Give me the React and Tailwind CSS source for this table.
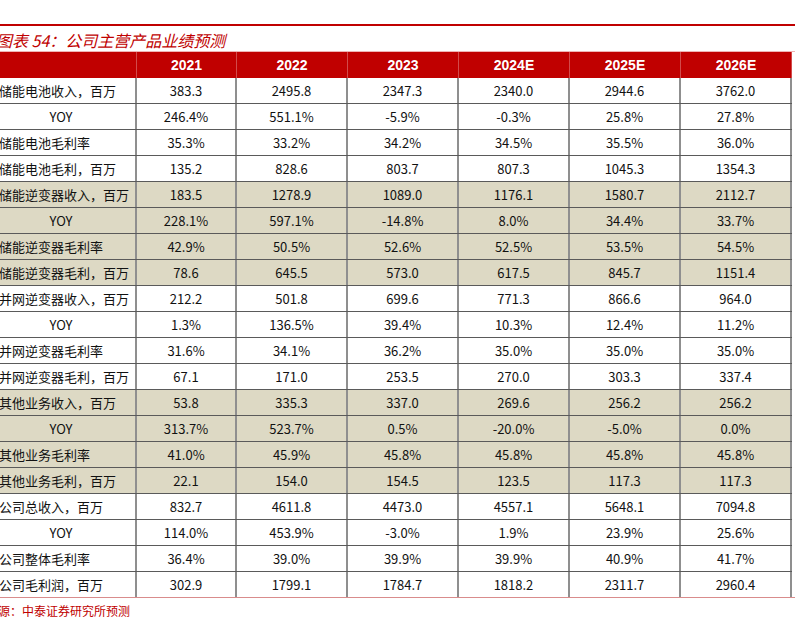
import React from 'react';

const years = ['2021', '2022', '2023', '2024E', '2025E', '2026E'];

// label, values, shaded
const rows = [
  ['储能电池收入，百万', ['383.3', '2495.8', '2347.3', '2340.0', '2944.6', '3762.0'], false],
  ['YOY', ['246.4%', '551.1%', '-5.9%', '-0.3%', '25.8%', '27.8%'], false],
  ['储能电池毛利率', ['35.3%', '33.2%', '34.2%', '34.5%', '35.5%', '36.0%'], false],
  ['储能电池毛利，百万', ['135.2', '828.6', '803.7', '807.3', '1045.3', '1354.3'], false],
  ['储能逆变器收入，百万', ['183.5', '1278.9', '1089.0', '1176.1', '1580.7', '2112.7'], true],
  ['YOY', ['228.1%', '597.1%', '-14.8%', '8.0%', '34.4%', '33.7%'], true],
  ['储能逆变器毛利率', ['42.9%', '50.5%', '52.6%', '52.5%', '53.5%', '54.5%'], true],
  ['储能逆变器毛利，百万', ['78.6', '645.5', '573.0', '617.5', '845.7', '1151.4'], true],
  ['并网逆变器收入，百万', ['212.2', '501.8', '699.6', '771.3', '866.6', '964.0'], false],
  ['YOY', ['1.3%', '136.5%', '39.4%', '10.3%', '12.4%', '11.2%'], false],
  ['并网逆变器毛利率', ['31.6%', '34.1%', '36.2%', '35.0%', '35.0%', '35.0%'], false],
  ['并网逆变器毛利，百万', ['67.1', '171.0', '253.5', '270.0', '303.3', '337.4'], false],
  ['其他业务收入，百万', ['53.8', '335.3', '337.0', '269.6', '256.2', '256.2'], true],
  ['YOY', ['313.7%', '523.7%', '0.5%', '-20.0%', '-5.0%', '0.0%'], true],
  ['其他业务毛利率', ['41.0%', '45.9%', '45.8%', '45.8%', '45.8%', '45.8%'], true],
  ['其他业务毛利，百万', ['22.1', '154.0', '154.5', '123.5', '117.3', '117.3'], true],
  ['公司总收入，百万', ['832.7', '4611.8', '4473.0', '4557.1', '5648.1', '7094.8'], false],
  ['YOY', ['114.0%', '453.9%', '-3.0%', '1.9%', '23.9%', '25.6%'], false],
  ['公司整体毛利率', ['36.4%', '39.0%', '39.9%', '39.9%', '40.9%', '41.7%'], false],
  ['公司毛利润，百万', ['302.9', '1799.1', '1784.7', '1818.2', '2311.7', '2960.4'], false],
];

const cjk = { fontFamily: '"Noto Sans CJK SC", "Liberation Sans", sans-serif' };

const App = () => {
  return (
    <div className="w-[795px] h-[625px] overflow-hidden bg-white" style={cjk}>
      <div className="pt-[24px]">
        <div className="h-[2px] bg-[#c00000]" />
        <div className="h-[25px] flex items-center -ml-[4px] pt-[2px] text-[16px] italic text-[#c00000] leading-none">
          图表 54：公司主营产品业绩预测
        </div>
        <div className="h-px bg-[#eeb4b4]" />

        <div className="-ml-[13px] w-[805px]">
          {/* header */}
          <div className="grid grid-cols-[150px_100px_111px_111px_111px_111px_111px] h-[26px] bg-[#c00000]">
            <div className="border-r border-[#d24a4a]" />
            {years.map((y) => (
              <div
                key={y}
                className="flex items-center justify-center border-r border-[#d24a4a] text-white font-bold text-[14px]"
                style={{ fontFamily: '"Liberation Sans", Arial, sans-serif' }}
              >
                {y}
              </div>
            ))}
          </div>

          {rows.map(([label, vals, shaded], i) => (
            <div
              key={i}
              className={`grid grid-cols-[150px_100px_111px_111px_111px_111px_111px] h-[26px] border-b ${
                i === rows.length - 1 ? 'border-[#c88080]' : 'border-[#5a5a5a]'
              } ${shaded ? 'bg-[#ddd9c4]' : 'bg-white'} text-[13px] text-[#111]`}
            >
              <div
                className={`flex items-center border-r-2 border-[#8f8f8f] ${
                  label === 'YOY' ? 'justify-center' : 'pl-[12px]'
                }`}
              >
                {label}
              </div>
              {vals.map((v, j) => (
                <div key={j} className="flex items-center justify-center border-r-2 border-[#8f8f8f]">
                  {v}
                </div>
              ))}
            </div>
          ))}
        </div>
        <div className="-mt-px h-px bg-[#d98c8c] w-[795px]" />

        <div className="-ml-[14px] mt-[7px] text-[12px] text-[#c00000] leading-none">
          来源：中泰证券研究所预测
        </div>
      </div>
    </div>
  );
};

export default App;
